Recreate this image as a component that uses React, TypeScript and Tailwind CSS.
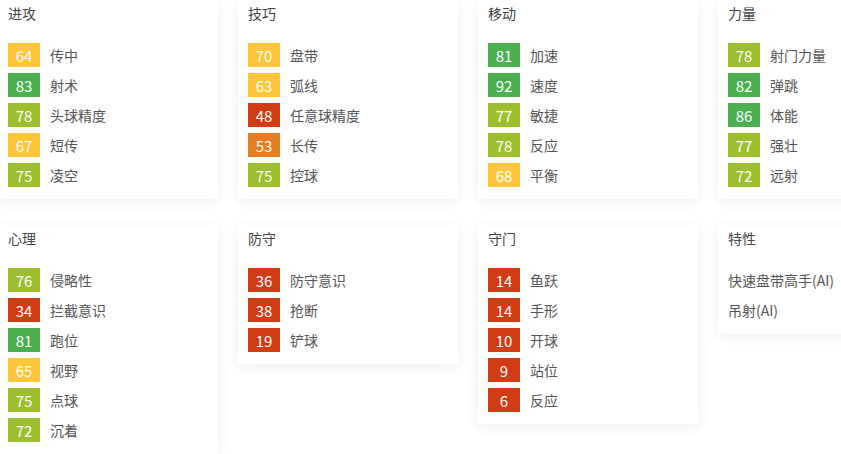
import React from 'react';

type Stat = { v: number; name: string };

interface Group {
  title: string;
  stats?: Stat[];
  traits?: string[];
}

const groups: Group[] = [
  {
    title: '进攻',
    stats: [
      { v: 64, name: '传中' },
      { v: 83, name: '射术' },
      { v: 78, name: '头球精度' },
      { v: 67, name: '短传' },
      { v: 75, name: '凌空' },
    ],
  },
  {
    title: '技巧',
    stats: [
      { v: 70, name: '盘带' },
      { v: 63, name: '弧线' },
      { v: 48, name: '任意球精度' },
      { v: 53, name: '长传' },
      { v: 75, name: '控球' },
    ],
  },
  {
    title: '移动',
    stats: [
      { v: 81, name: '加速' },
      { v: 92, name: '速度' },
      { v: 77, name: '敏捷' },
      { v: 78, name: '反应' },
      { v: 68, name: '平衡' },
    ],
  },
  {
    title: '力量',
    stats: [
      { v: 78, name: '射门力量' },
      { v: 82, name: '弹跳' },
      { v: 86, name: '体能' },
      { v: 77, name: '强壮' },
      { v: 72, name: '远射' },
    ],
  },
  {
    title: '心理',
    stats: [
      { v: 76, name: '侵略性' },
      { v: 34, name: '拦截意识' },
      { v: 81, name: '跑位' },
      { v: 65, name: '视野' },
      { v: 75, name: '点球' },
      { v: 72, name: '沉着' },
    ],
  },
  {
    title: '防守',
    stats: [
      { v: 36, name: '防守意识' },
      { v: 38, name: '抢断' },
      { v: 19, name: '铲球' },
    ],
  },
  {
    title: '守门',
    stats: [
      { v: 14, name: '鱼跃' },
      { v: 14, name: '手形' },
      { v: 10, name: '开球' },
      { v: 9, name: '站位' },
      { v: 6, name: '反应' },
    ],
  },
  {
    title: '特性',
    traits: ['快速盘带高手(AI)', '吊射(AI)'],
  },
];

function badgeClass(v: number) {
  if (v >= 80) return 'bg-[#4caf50]';
  if (v >= 72) return 'bg-[#9cbe2f]';
  if (v >= 60) return 'bg-[#ffc63a]';
  if (v >= 50) return 'bg-[#e67d23]';
  return 'bg-[#d23c14]';
}

function Card({ g }: { g: Group }) {
  return (
    <div className="bg-white shadow-[0_3px_14px_rgba(0,0,0,0.07)] px-2.5 pt-[3px] pb-3 self-start">
      <div className="text-[14px] leading-5 text-[#444]">{g.title}</div>
      <div className="mt-5 flex flex-col gap-1.5">
        {g.stats?.map((s) => (
          <div key={s.name + s.v} className="flex items-center h-6">
            <span
              className={`${badgeClass(s.v)} w-8 h-6 flex items-center justify-center text-white text-[15px] leading-none`}
            >
              {s.v}
            </span>
            <span className="ml-2.5 text-[14px] text-[#555]">{s.name}</span>
          </div>
        ))}
        {g.traits?.map((t) => (
          <div key={t} className="h-6 flex items-center text-[14px] text-[#555]">
            {t}
          </div>
        ))}
      </div>
    </div>
  );
}

export default function App() {
  return (
    <div
      className="w-[841px] h-[454px] overflow-hidden bg-white"
      style={{ fontFamily: '"Noto Sans CJK SC", "Noto Sans", sans-serif' }}
    >
      <div className="ml-[-2px] grid grid-cols-[repeat(4,220px)] gap-x-5 gap-y-[26px] items-start">
        {groups.map((g) => (
          <Card key={g.title} g={g} />
        ))}
      </div>
    </div>
  );
}
